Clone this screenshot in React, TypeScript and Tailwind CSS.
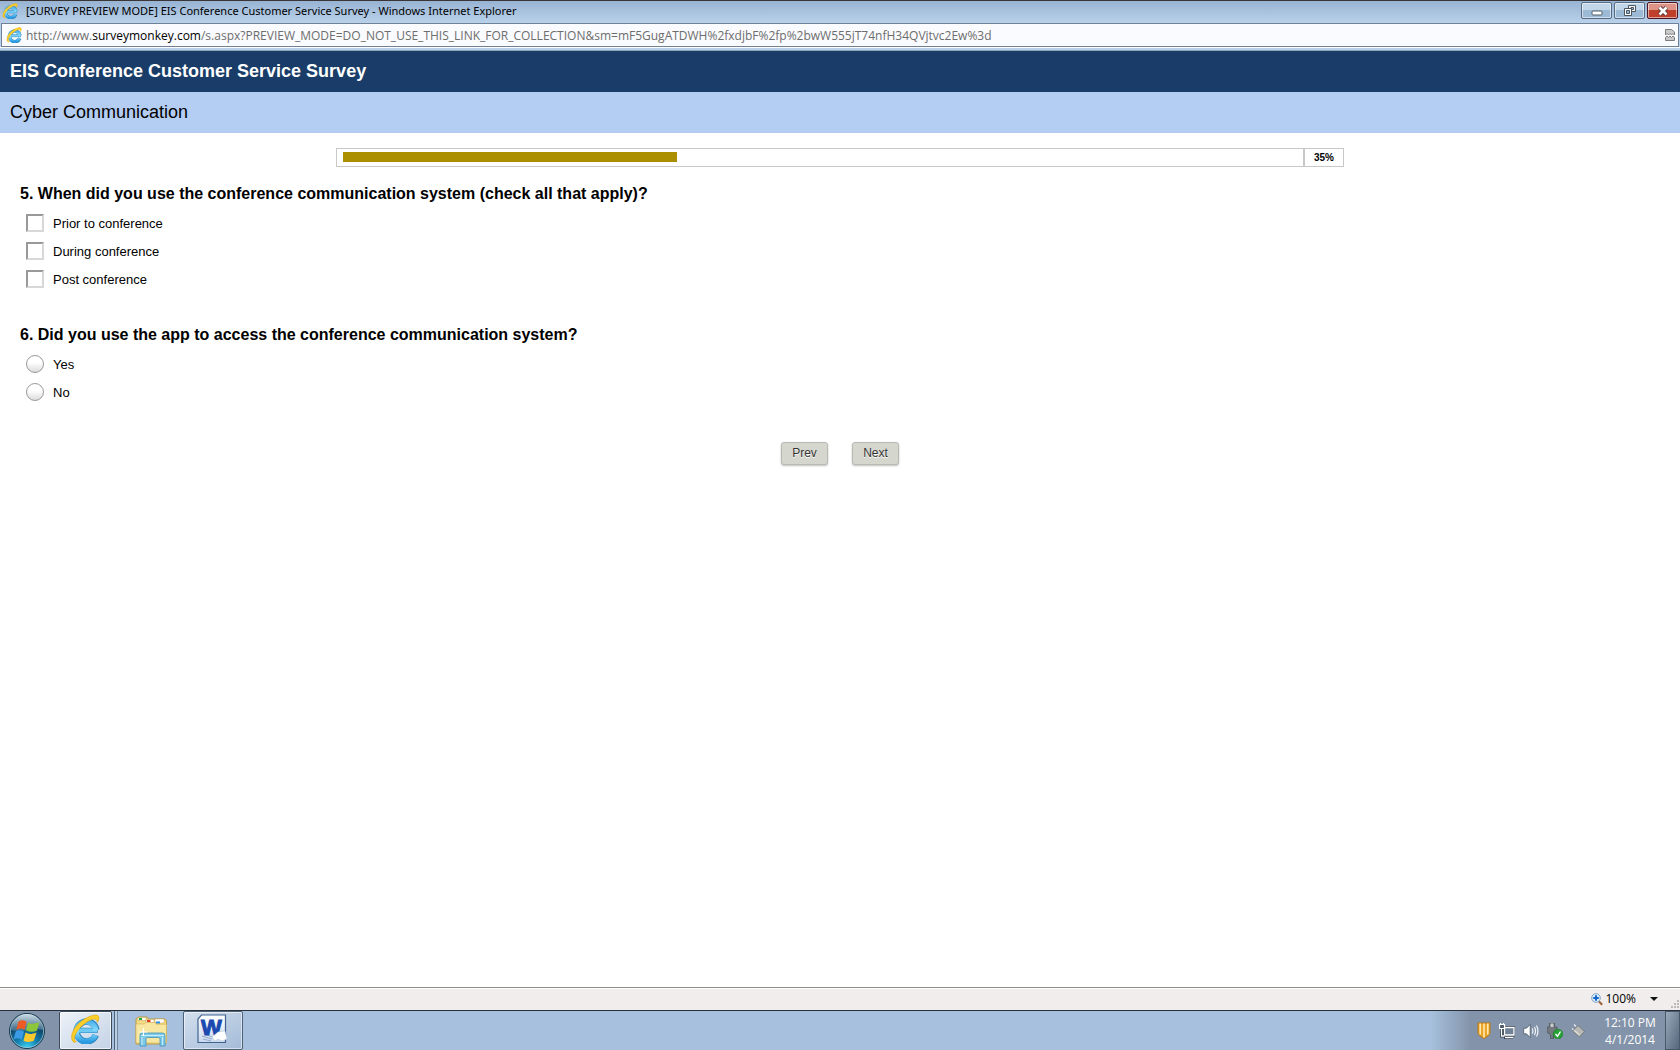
import React, { useState } from 'react';

const IeIcon = ({ className }: { className?: string }) => (
  <svg viewBox="0 0 32 32" fill="none" className={className} aria-hidden="true">
    <defs>
      <linearGradient id="ieBlue" x1="0" y1="0" x2="0" y2="1">
        <stop offset="0" stopColor="#4fb4ec" />
        <stop offset="0.5" stopColor="#8fe0fd" />
        <stop offset="1" stopColor="#2a9be2" />
      </linearGradient>
    </defs>
    <path d="M8 17.500H29.500" stroke="#2a83bd" strokeWidth="5.600" />
    <path d="M27.500 22.500a10.600 10.600 0 1 1 .6-5.500" stroke="#2a83bd" strokeWidth="7" />
    <path d="M8 17.500H28.800" stroke="#6fcbf6" strokeWidth="4.400" />
    <path d="M27 22.500a10.500 10.500 0 1 1 .6-5" stroke="url(#ieBlue)" strokeWidth="5.600" />
    <path d="M4.500 30.500C-1 27 2 16 11 8.500C20 1.500 28.500-.5 30.500 2.500c1 1.800 0 4.500-1.500 6.500 0-3-1.500-4.300-5-3.300C15 8.500 4.500 19.500 4.800 26.500c.1 1.800.8 2.500 1.900 2.800z" fill="#fcd028" stroke="#d99a08" strokeWidth="0.600" />
  </svg>
);

const StartOrb = () => (
  <svg viewBox="0 0 38 38" className="size-[38px]" aria-hidden="true">
    <defs>
      <radialGradient id="orb" cx="0.5" cy="1" r="0.9">
        <stop offset="0" stopColor="#3fd8f8" />
        <stop offset="0.35" stopColor="#1684b4" />
        <stop offset="0.75" stopColor="#0e4568" />
        <stop offset="1" stopColor="#3f6480" />
      </radialGradient>
      <linearGradient id="orbGloss" x1="0" y1="0" x2="0" y2="1">
        <stop offset="0" stopColor="#dce8f0" stopOpacity="0.9" />
        <stop offset="1" stopColor="#8fb0c4" stopOpacity="0.35" />
      </linearGradient>
    </defs>
    <circle cx="19" cy="19" r="17.500" fill="url(#orb)" stroke="#17364b" />
    <circle cx="19" cy="19" r="16.600" fill="none" stroke="#9fc4d6" strokeWidth="0.800" />
    <path d="M3 18a16 16 0 0 1 32 0c-8-3-24 3-32 0z" fill="url(#orbGloss)" />
    <path d="M10.500 9.500c3-2 5.500-1.500 8 .2l-2 8.300c-2.500-1.700-5-2-8.300 0z" fill="#ee5a24" />
    <path d="M20 10.500c3 1.600 6 1.800 11.500-.4l-2.500 8.300c-4 2-7.500 1.800-11 0z" fill="#8cc63a" />
    <path d="M7.700 19.500c3-2 5.500-1.600 8.300.1l-2.200 8c-2.500-1.600-5-2-8.300 0z" fill="#3b9be8" />
    <path d="M17.500 20.600c3 1.700 6 1.800 11-.2l-2.500 8.200c-4 2-7.300 1.800-10.500.2z" fill="#fdc92c" />
  </svg>
);

const FolderIcon = () => (
  <svg viewBox="0 0 34 32" className="h-8 w-[34px]" aria-hidden="true">
    <path d="M2 29V4.500L4 2h9l1.500 2H31l1.500 2V27l-2 2z" fill="#f3dc84" stroke="#b99a45" />
    <path d="M4 2.500h8v3H4zM12 4.500h8v3h-8zM21 4h9v4h-9z" fill="#fff" stroke="#c4a24c" strokeWidth="0.500" />
    <path d="M5 3h3v2H5z" fill="#1faa3b" />
    <path d="M13 5h3.500v2H13z" fill="#e03a1c" />
    <path d="M22 6.500h4v2h-4z" fill="#2d8fe6" />
    <path d="M2 9h8l2-1.500h9l1 1.800h10.500V28H2z" fill="#f8e7a0" stroke="#d2b45c" strokeWidth="0.600" />
    <path d="M6 31V20q0-2 2-2h20q3 0 3 2v11h-5v-7q0-1.500-1.500-1.500h-11Q12 22.500 12 24v7z" fill="#7cc9e8" stroke="#4292bb" strokeWidth="0.800" />
    <path d="M7 20.500h23M8 22v8M28.500 22v8" stroke="#c6ecf9" fill="none" />
    <path d="M9.500 13v8M5.500 17h8" stroke="#fff" />
  </svg>
);

const WordIcon = () => (
  <svg viewBox="0 0 30 30" className="size-[30px]" aria-hidden="true">
    <defs>
      <linearGradient id="wordPage" x1="0" y1="0" x2="0" y2="1">
        <stop offset="0" stopColor="#fff" />
        <stop offset="1" stopColor="#c9d9ef" />
      </linearGradient>
    </defs>
    <path d="M4.500 1H28.500V28.500H1V5z" fill="url(#wordPage)" stroke="#41638e" strokeWidth="1.200" />
    <path d="M5 22l10 3M8 20l10 4M6 25l8 2" stroke="#94abc9" />
    <text x="4" y="21" fontFamily="Liberation Sans, sans-serif" fontWeight="700" fontSize="22" fill="#1a49b0" stroke="#1a49b0" strokeWidth="1">W</text>
    <path d="M21 18l7-1 2 8-5 2-4-2-3 2-3-4z" fill="#fff" stroke="#b7c4d6" strokeWidth="0.500" />
  </svg>
);

const BrokenPageIcon = () => (
  <svg viewBox="0 0 10 12" className="h-3 w-[10px]" aria-hidden="true">
    <path d="M.500 .500h6L9.500 3v3L8 4.500 6.500 6 5 4.500 3.500 6 2 4.500.500 6z" fill="#c9c9c9" stroke="#7c7c7c" />
    <path d="M.500 11.500V8.500L2 7l1.500 1.500L5 7l1.500 1.500L8 7l1.500 1.500v3z" fill="#c9c9c9" stroke="#7c7c7c" />
  </svg>
);

const ZoomIcon = () => (
  <svg viewBox="0 0 12 13" className="h-[13px] w-3" aria-hidden="true">
    <path d="M8 8.500l3.200 3.300" stroke="#9a5f34" strokeWidth="2" />
    <circle cx="5" cy="5" r="4.300" fill="#dff0fb" stroke="#7fa3c4" />
    <path d="M5 2.200v5.600M2.200 5h5.600" stroke="#1467c8" strokeWidth="2" />
  </svg>
);

const ShieldIcon = () => (
  <svg viewBox="0 0 14 17" className="h-[17px] w-[14px]" aria-hidden="true">
    <path d="M1 1h12v9.500c0 2.500-3 4-6 6-3-2-6-3.500-6-6z" fill="#e9a52c" stroke="#b9760f" />
    <path d="M3.200 1.500v11M7 1.500v14M10.800 1.500v11" stroke="#ffe9ae" strokeWidth="1.600" />
  </svg>
);

const NetworkIcon = () => (
  <svg viewBox="0 0 16 16" className="size-4" fill="none" aria-hidden="true">
    <path d="M5.500 4.500h9.500v7.500H5.500zM5 14.500h9M2.500 5v8h3" stroke="#333f4c" strokeWidth="3" />
    <path d="M5.500 4.500h9.500v7.500H5.500z" fill="#6f8297" stroke="#fff" strokeWidth="1.300" />
    <path d="M6 14.500h8M2.500 5v8h3" stroke="#fff" strokeWidth="1.300" />
    <path d="M.500 1.500h5v4h-5zM1.500 0v2M4.500 0v2" fill="#4c5b6b" stroke="#fff" strokeWidth="1.200" />
  </svg>
);

const SpeakerIcon = () => (
  <svg viewBox="0 0 16 16" className="size-4" fill="none" aria-hidden="true">
    <path d="M.700 5.200h2.800L7.200 1.500v13L3.500 10.800H.700z" fill="#fff" stroke="#3f4c5a" strokeWidth="0.700" />
    <path d="M9.200 5.500q1.500 2.500 0 5M11.400 4q2.300 4 0 8M13.400 2.500q3.200 5.500 0 11" stroke="#f1f4f7" strokeWidth="1.200" />
  </svg>
);

const SafeRemoveIcon = () => (
  <svg viewBox="0 0 16 16" className="size-4" aria-hidden="true">
    <path d="M2.500 0h5v4H10v5L6.500 12v4h-3v-4L0 9V4h2.500z" fill="#74797f" stroke="#3f454c" strokeWidth="0.600" />
    <path d="M3.500 .500h3V4h-3z" fill="#c9cccf" />
    <circle cx="11" cy="11" r="4.800" fill="#26a135" stroke="#14751f" strokeWidth="0.500" />
    <path d="M8.500 11l2 2.300 3-4.800" stroke="#fff" strokeWidth="1.400" fill="none" />
  </svg>
);

const PlugIcon = () => (
  <svg viewBox="0 0 14 14" className="size-[14px]" aria-hidden="true">
    <path d="M1 4.500l2 1.500M3 .500l2 2" stroke="#eceff1" strokeWidth="1.200" />
    <path d="M1.500 7L7 1.500 13.500 7.500 8.500 13z" fill="#b8b8b5" stroke="#6d7072" strokeWidth="0.800" />
    <path d="M3.500 6.500l5 4.500" stroke="#dededc" strokeWidth="1.200" />
  </svg>
);

const captionButton =
  'flex h-[17px] w-[31px] items-center justify-center rounded-[2px] border shadow-[inset_0_0_0_1px_#ffffff88]';

const WindowControls = () => (
  <div className="flex gap-[2px] pr-[2px]">
    <button aria-label="Minimize" className={`${captionButton} border-[#566a83] bg-linear-to-b from-[#c2d6ea] from-50% to-[#9cb9d6] to-50%`}>
      <svg viewBox="0 0 12 6" className="mt-1 h-[6px] w-3">
        <rect x="1" y="1" width="10" height="4" rx="1" fill="#fff" stroke="#555e69" />
      </svg>
    </button>
    <button aria-label="Restore" className={`${captionButton} border-[#566a83] bg-linear-to-b from-[#c2d6ea] from-50% to-[#9cb9d6] to-50%`}>
      <svg viewBox="0 0 12 11" className="h-[11px] w-3">
        <path d="M4.500 .500h7v6h-7z" fill="#f6f6f6" stroke="#4a5562" />
        <path d="M7 2.500h2.500v2H7z" fill="#9cb9d6" stroke="#4a5562" />
        <path d="M.500 3.500h7v7h-7z" fill="#fff" stroke="#4a5562" />
        <path d="M2.500 5.500h3v3h-3z" fill="#9cb9d6" stroke="#4a5562" />
      </svg>
    </button>
    <button aria-label="Close" className={`${captionButton} border-[#4d1523] bg-linear-to-b from-[#dd9487] from-50% to-[#c03f2b] to-50%`}>
      <svg viewBox="0 0 12 10" className="h-[10px] w-3" fill="none">
        <path d="M2.500 1.500l7 7M9.500 1.500l-7 7" stroke="#5a3a3d" strokeWidth="4.500" />
        <path d="M2.500 1.500l7 7M9.500 1.500l-7 7" stroke="#fff" strokeWidth="2.600" />
      </svg>
    </button>
  </div>
);

const Question: React.FC<{ title: string; children: React.ReactNode }> = ({ title, children }) => (
  <fieldset className="mb-[33px]">
    <legend className="mb-2 text-base leading-6 font-bold">{title}</legend>
    <div className="flex flex-col items-start gap-2 pl-[6px]">{children}</div>
  </fieldset>
);

const Choice: React.FC<{
  type: 'checkbox' | 'radio';
  name: string;
  label: string;
  checked: boolean;
  onChange: () => void;
}> = ({ type, name, label, checked, onChange }) => (
  <label className="flex items-start gap-[9px] text-[13px] leading-5">
    <input
      type={type}
      name={name}
      checked={checked}
      onChange={onChange}
      className={
        type === 'checkbox'
          ? 'size-[18px] appearance-none border-2 border-t-[#999] border-r-[#d8d8d8] border-b-[#d8d8d8] border-l-[#999] bg-white checked:bg-[#193d68]'
          : 'size-[18px] appearance-none rounded-full border border-[#999] bg-linear-to-b from-white from-40% to-[#dcdcdc] checked:bg-[#193d68]'
      }
    />
    {label}
  </label>
);

const navButton =
  'h-[23px] w-[47px] rounded-[3px] border border-[#b9bab3] bg-[#d5d6cd] text-xs leading-[19px] text-[#333] shadow-[0_1px_2px_#00000040] [text-shadow:0_1px_0_#fff]';

export default function App() {
  const [times, setTimes] = useState<string[]>([]);
  const [usedApp, setUsedApp] = useState('');
  const percent = 35;

  const toggleTime = (time: string) =>
    setTimes(times.includes(time) ? times.filter((t) => t !== time) : [...times, time]);

  return (
    <div className="flex min-h-screen flex-col bg-white font-['Liberation_Sans',Arial,sans-serif] text-black">
      {/* Window chrome */}
      <header className="bg-[#b9d1ea] font-['Open_Sans','Noto_Sans',sans-serif] text-xs">
        <div className="flex h-[23px] items-start justify-between border-t border-[#3a3638] bg-linear-to-b from-[#98b4d3] to-[#b9d1ea] pl-[2px]">
          <div className="flex h-5 items-center gap-2">
            <IeIcon className="size-4" />
            <h1 className="font-['Noto_Sans',sans-serif] text-[11px]">
              [SURVEY PREVIEW MODE] EIS Conference Customer Service Survey - Windows Internet Explorer
            </h1>
          </div>
          <div className="pt-px">
            <WindowControls />
          </div>
        </div>
        <div className="mx-px flex h-6 items-center border border-[#6f8196] bg-[#fafbfe] pr-[3px] pl-1">
          <IeIcon className="size-4" />
          <div role="textbox" aria-label="Address" className="ml-1 flex-1 pt-px text-[#6d6d6d]">
            http://www.<span className="text-black">surveymonkey.com</span>
            /s.aspx?PREVIEW_MODE=DO_NOT_USE_THIS_LINK_FOR_COLLECTION&amp;sm=mF5GugATDWH%2fxdjbF%2fp%2bwW555jT74nfH34QVjtvc2Ew%3d
          </div>
          <button aria-label="Compatibility View">
            <BrokenPageIcon />
          </button>
        </div>
        <div className="h-1 border-t border-b border-t-white border-b-[#8fa5ba]" />
      </header>

      {/* Survey page */}
      <main className="flex-1">
        <h2 className="bg-[#193d68] px-[10px] text-lg leading-[41px] font-bold text-white">
          EIS Conference Customer Service Survey
        </h2>
        <h3 className="bg-[#b4cdf3] px-[10px] text-lg leading-[41px]">Cyber Communication</h3>

        <div className="mx-auto mt-[15px] flex h-[19px] w-3/5 border border-[#c8c8c8]">
          <div className="flex-1 px-[6px] py-[3px]" role="progressbar" aria-label="Survey progress" aria-valuenow={percent}>
            <div className="h-[10px] bg-[#ab8f00]" style={{ width: `${percent}%` }} />
          </div>
          <div className="w-10 border-l-2 border-[#c8c8c8] text-center text-[10px] leading-[17px] font-bold">{percent}%</div>
        </div>

        <form className="px-5 pt-[15px]" onSubmit={(e) => e.preventDefault()}>
          <Question title="5. When did you use the conference communication system (check all that apply)?">
            {['Prior to conference', 'During conference', 'Post conference'].map((time) => (
              <Choice
                key={time}
                type="checkbox"
                name="times"
                label={time}
                checked={times.includes(time)}
                onChange={() => toggleTime(time)}
              />
            ))}
          </Question>
          <Question title="6. Did you use the app to access the conference communication system?">
            {['Yes', 'No'].map((answer) => (
              <Choice
                key={answer}
                type="radio"
                name="usedApp"
                label={answer}
                checked={usedApp === answer}
                onChange={() => setUsedApp(answer)}
              />
            ))}
          </Question>
          <div className="flex justify-center gap-6 pt-[6px]">
            <button type="button" className={navButton}>Prev</button>
            <button type="submit" className={navButton}>Next</button>
          </div>
        </form>
      </main>

      {/* Status bar */}
      <div className="flex h-[23px] items-center justify-end border-t border-[#8c8c8c] bg-[#f0edec] font-['Open_Sans','Noto_Sans',sans-serif] text-xs shadow-[inset_0_1px_0_#fff]">
        <button className="flex items-center gap-[2px]">
          <ZoomIcon />
          100%
          <svg viewBox="0 0 8 4" className="ml-3 h-1 w-2">
            <path d="M0 0h8L4 4z" fill="#111" />
          </svg>
        </button>
        <svg viewBox="0 0 10 10" className="mt-3 ml-3 size-[10px]" fill="#bdb9b7">
          <path d="M7 0h2v2H7zM4 3h2v2H4zM7 3h2v2H7zM1 6h2v2H1zM4 6h2v2H4zM7 6h2v2H7z" />
        </svg>
      </div>

      {/* Taskbar */}
      <footer className="flex h-10 items-stretch border-t border-[#27313d] bg-[#a6c0dd] font-['Open_Sans','Noto_Sans',sans-serif] text-xs">
        <button aria-label="Start" className="flex w-[59px] items-center bg-[#8394aa] pl-2">
          <StartOrb />
        </button>
        <button aria-label="Internet Explorer" className="flex w-[56px] border-r border-[#4f6175] pr-[2px]">
          <span className="flex h-full flex-1 items-center justify-center rounded-[2px] border border-[#3c4b5c] bg-linear-to-br from-[#eef2f8] to-[#c3d2e6] pr-[2px] pb-1 shadow-[inset_0_0_0_1px_#ffffffaa]">
            <IeIcon className="size-[30px]" />
          </span>
        </button>
        <span className="w-[3px] border-r border-[#7389a2] bg-[#b9cde4]" />
        <button aria-label="Windows Explorer" className="flex w-[65px] items-center justify-center">
          <FolderIcon />
        </button>
        <button aria-label="Microsoft Word" className="flex w-[60px] items-center justify-center rounded-[2px] border border-[#4f6175] bg-linear-to-br from-[#d3dfed] to-[#a3bbd8] pr-[2px] pb-1 shadow-[inset_0_0_0_1px_#ffffff88]">
          <WordIcon />
        </button>
        <div className="ml-auto flex items-center bg-linear-to-r from-[#a6c0dd] to-[#8394aa] to-[40px] pl-[46px] text-white">
          <div className="flex items-center gap-2">
            <ShieldIcon />
            <NetworkIcon />
            <SpeakerIcon />
            <SafeRemoveIcon />
            <PlugIcon />
          </div>
          <time className="w-20 pl-[10px] text-center leading-[17px]">
            12:10 PM
            <br />
            4/1/2014
          </time>
          <button aria-label="Show desktop" className="h-full w-[15px] border border-[#49596b] bg-linear-to-br from-[#9aaabb] to-[#55677b]" />
        </div>
      </footer>
    </div>
  );
}
